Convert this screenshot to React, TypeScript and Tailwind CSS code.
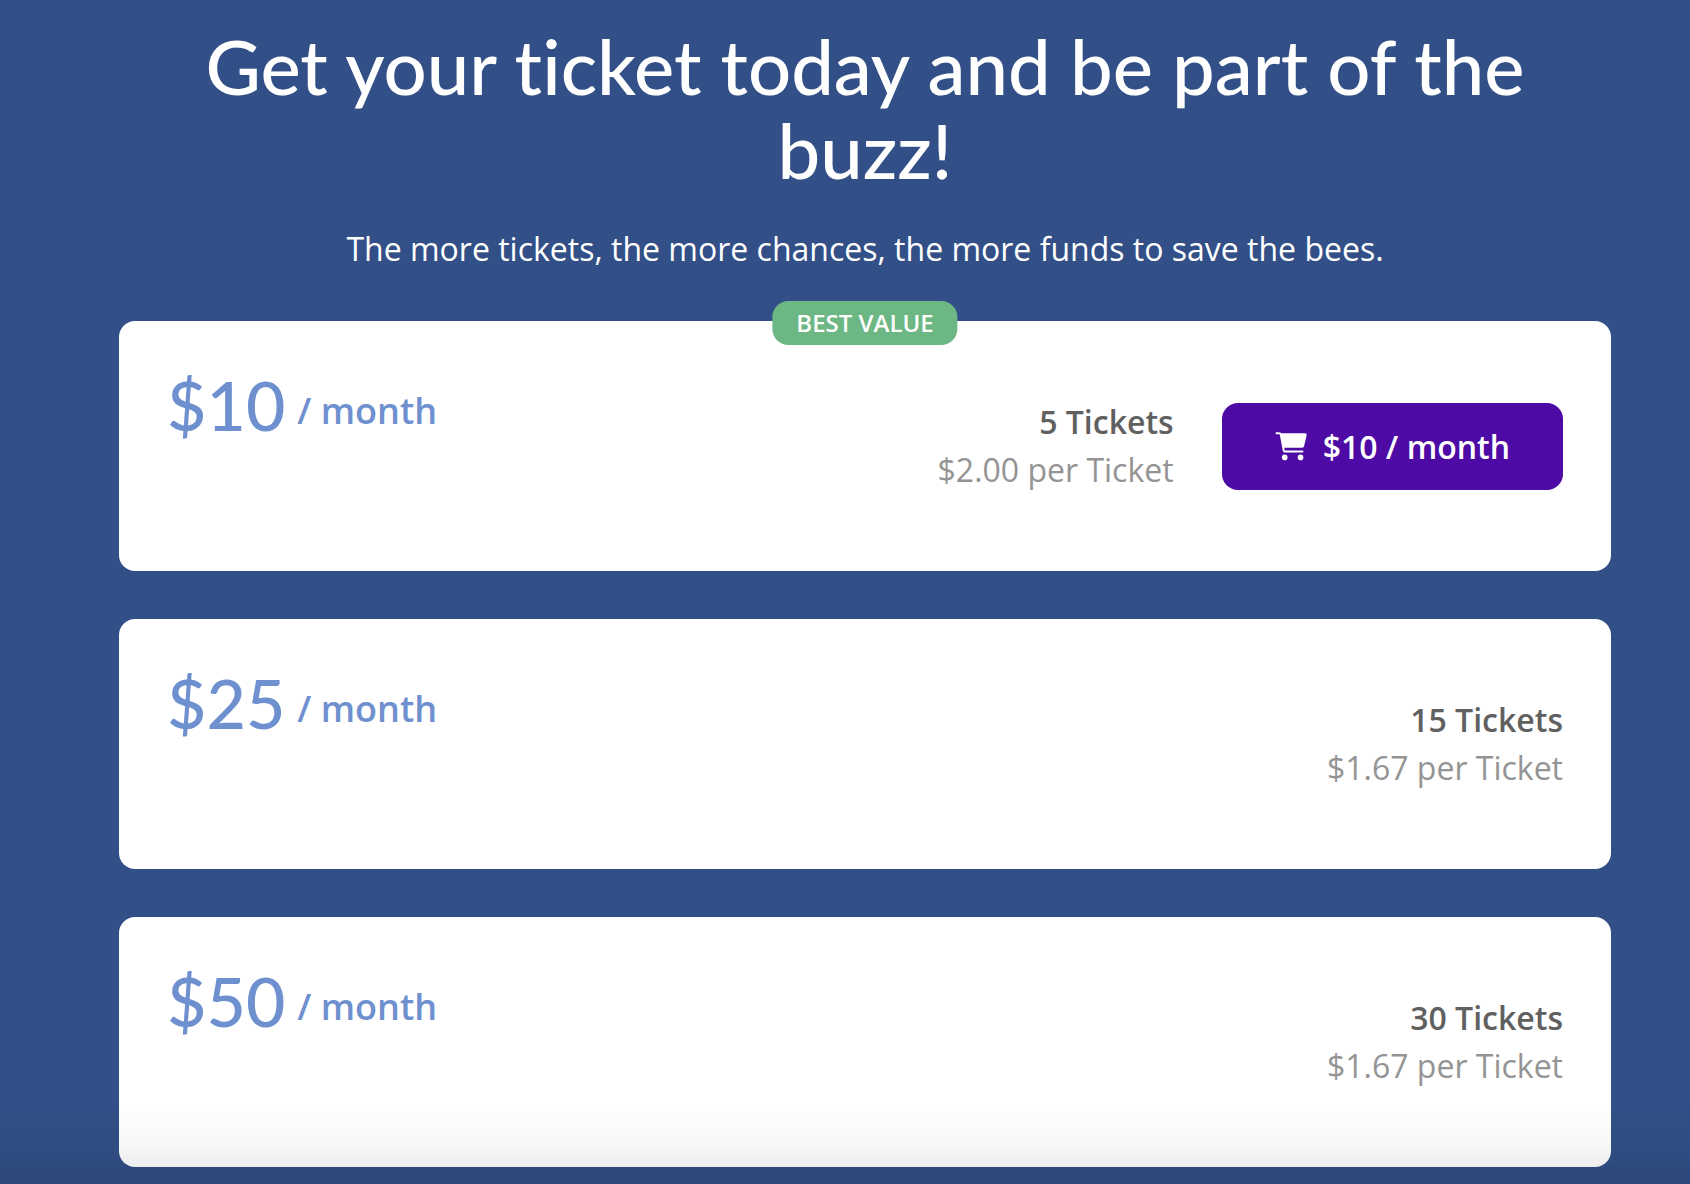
const plans = [
    { amount: "$10", tickets: "5 Tickets", rate: "$2.00 per Ticket", best: true },
    { amount: "$25", tickets: "15 Tickets", rate: "$1.67 per Ticket", best: false },
    { amount: "$50", tickets: "30 Tickets", rate: "$1.67 per Ticket", best: false },
];

function CartIcon() {
    return (
        <svg viewBox="0 0 96 88" className="h-[29px] w-8" fill="currentColor" aria-hidden="true">
            <path
                d="M4 4h8c3 0 4.500 1.500 5 4l9 48c.6 2.500 2 3.500 4 3.500h53"
                fill="none"
                stroke="currentColor"
                strokeWidth="6"
                strokeLinecap="round"
                strokeLinejoin="round"
            />
            <path d="M15 4h76c3.500 0 5 2.500 4.400 5.500L88 42c-.8 4-2.500 6-6.500 6H25z" />
            <circle cx="29" cy="77" r="8.500" />
            <circle cx="77" cy="77" r="8.500" />
        </svg>
    );
}

export default function App() {
    return (
        <div className="relative min-h-screen bg-[#325087] font-['Open_Sans',sans-serif]">
            <main className="pt-6 pr-[79px] pb-4 pl-[119px]">
                <header className="text-center text-white">
                    <h1 className="px-12 font-['Lato',sans-serif] text-[76px] leading-[84px] font-medium [font-variant-ligatures:none]">
                        Get your ticket today and be part of the buzz!
                    </h1>
                    <p className="mt-8 text-[32px] leading-[49px]">
                        The more tickets, the more chances, the more funds to save the bees.
                    </p>
                </header>

                <div className="mt-12 flex flex-col gap-12">
                    {plans.map((plan) => (
                        <section key={plan.amount} className="relative flex min-h-[250px] justify-between rounded-2xl bg-white px-12">
                            {plan.best && (
                                <span className="absolute -top-5 left-1/2 -translate-x-1/2 rounded-2xl bg-[#6db784] px-6 text-2xl leading-[44px] font-semibold whitespace-nowrap text-white">
                                    BEST VALUE
                                </span>
                            )}
                            <div className="flex items-end gap-3 self-start pt-12 text-[#6e90cf]">
                                <span className="font-['Lato',sans-serif] text-[68px] leading-[72px] font-medium">{plan.amount}</span>
                                <span className="text-[36px] leading-[60px] font-semibold">/ month</span>
                            </div>
                            <div className="flex items-center gap-12">
                                <div className="text-right text-[32px] leading-[48px]">
                                    <p className="font-semibold text-[#606060]">{plan.tickets}</p>
                                    <p className="text-[#949494]">{plan.rate}</p>
                                </div>
                                {plan.best && (
                                    <button
                                        type="button"
                                        className="flex items-center gap-4 rounded-2xl bg-[#4d0aa5] px-[53px] py-5 text-[32px] leading-[47px] font-semibold text-white"
                                    >
                                        <CartIcon />
                                        $10 / month
                                    </button>
                                )}
                            </div>
                        </section>
                    ))}
                </div>
            </main>

            {/* Bottom fade */}
            <div className="pointer-events-none fixed inset-x-0 bottom-0 h-20 bg-linear-to-t from-black/10 via-black/3 to-transparent" />
        </div>
    );
}
